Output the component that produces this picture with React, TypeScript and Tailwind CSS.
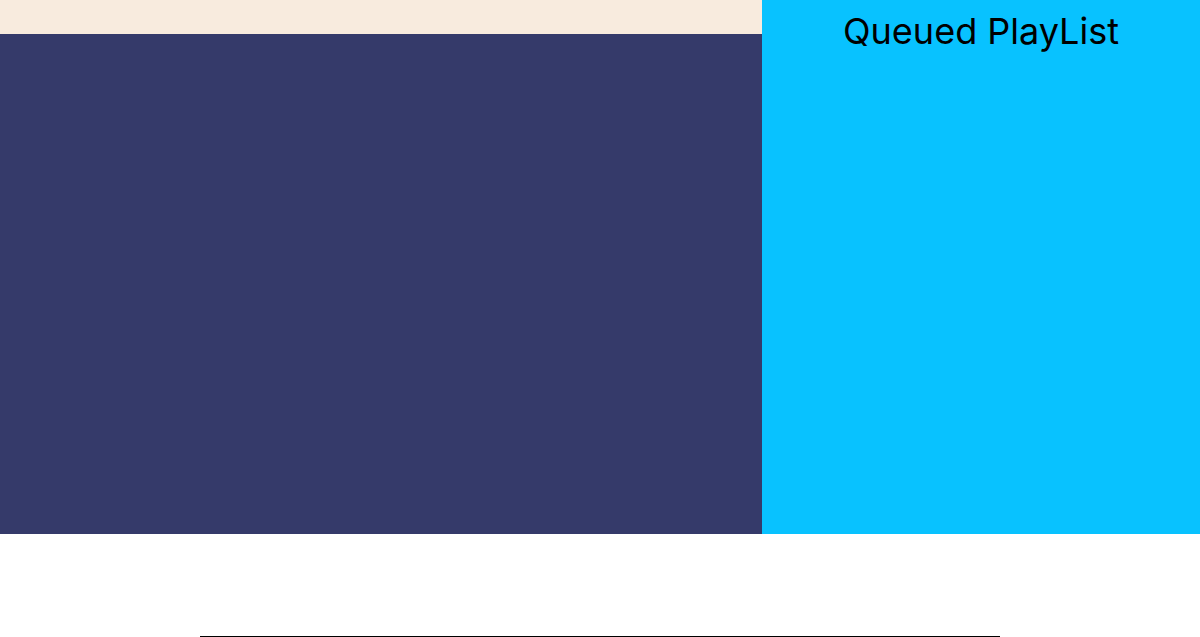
export default function App() {
  return (
    <div className="font-['Inter',sans-serif]">
      <div className="flex h-[534px]">
        <div className="flex w-[762px] flex-col">
          <div className="h-[34px] bg-[#f8ebde]" />
          <div className="flex-1 bg-[#353a6a]" />
        </div>
        <div className="flex-1 bg-[#08c2ff]">
          <h2 className="pt-[11px] text-center text-4xl text-black">Queued PlayList</h2>
        </div>
      </div>
      <hr className="mx-auto mt-[102px] w-[800px] border-black" />
    </div>
  );
}
